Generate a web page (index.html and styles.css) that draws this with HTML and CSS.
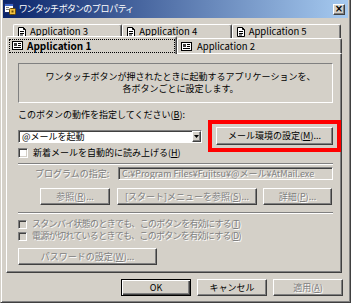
FILE: index.html
```html
<!DOCTYPE html>
<html>
<head>
  <meta charset="utf-8">
  <title>ワンタッチボタンのプロパティ</title>
  <link rel="stylesheet" href="styles.css">
</head>
<body>
  <div class="window">
    <div class="titlebar">
      <svg class="app-icon" width="12" height="12" viewBox="0 0 12 12">
        <rect x="0.5" y="0.5" width="9" height="9" fill="#ffffff" stroke="#1c2c6c"/>
        <rect x="1" y="1" width="8" height="2" fill="#3a64c8"/>
        <rect x="2" y="4" width="3" height="1" fill="#808080"/>
        <rect x="2" y="6" width="3" height="1" fill="#808080"/>
        <rect x="5.5" y="5.5" width="6" height="6" rx="1" fill="#f0c040" stroke="#6a4a00"/>
        <rect x="7.5" y="7.5" width="2" height="2" fill="#6a4a00"/>
      </svg>
      <span class="title">ワンタッチボタンのプロパティ</span>
      <span class="close">×</span>
    </div>

    <div class="tabs">
      <div class="tab-row back">
        <div class="tab">
          <svg class="doc-icon" width="8" height="10" viewBox="0 0 8 10">
            <path d="M0.5 0.5 H5.5 L7.5 2.5 V9.5 H0.5 Z" fill="#ffffff" stroke="#000000"/>
            <path d="M5.5 0.5 V2.5 H7.5" fill="none" stroke="#000000"/>
            <path d="M2 4.5 H6 M2 6.5 H6 M2 8 H5" stroke="#000000"/>
          </svg>
          <span>Application 3</span>
        </div>
        <div class="tab">
          <svg class="doc-icon" width="8" height="10" viewBox="0 0 8 10">
            <path d="M0.5 0.5 H5.5 L7.5 2.5 V9.5 H0.5 Z" fill="#ffffff" stroke="#000000"/>
            <path d="M5.5 0.5 V2.5 H7.5" fill="none" stroke="#000000"/>
            <path d="M2 4.5 H6 M2 6.5 H6 M2 8 H5" stroke="#000000"/>
          </svg>
          <span>Application 4</span>
        </div>
        <div class="tab">
          <svg class="doc-icon" width="8" height="10" viewBox="0 0 8 10">
            <path d="M0.5 0.5 H5.5 L7.5 2.5 V9.5 H0.5 Z" fill="#ffffff" stroke="#000000"/>
            <path d="M5.5 0.5 V2.5 H7.5" fill="none" stroke="#000000"/>
            <path d="M2 4.5 H6 M2 6.5 H6 M2 8 H5" stroke="#000000"/>
          </svg>
          <span>Application 5</span>
        </div>
      </div>
      <div class="tab-row front">
        <div class="tab selected">
          <span class="focus">
            <svg class="card-icon" width="11" height="9" viewBox="0 0 11 9">
              <rect x="0.5" y="0.5" width="10" height="8" fill="#ffffff" stroke="#000000"/>
              <rect x="2" y="2" width="3" height="3" fill="#404040"/>
              <path d="M6 2.5 H9 M6 4.5 H9 M2 6.5 H9" stroke="#000000"/>
            </svg>
            <b>Application 1</b>
          </span>
        </div>
        <div class="tab">
          <svg class="card-icon" width="11" height="9" viewBox="0 0 11 9">
            <rect x="0.5" y="0.5" width="10" height="8" fill="#ffffff" stroke="#000000"/>
            <rect x="2" y="2" width="3" height="3" fill="#404040"/>
            <path d="M6 2.5 H9 M6 4.5 H9 M2 6.5 H9" stroke="#000000"/>
          </svg>
          <span>Application 2</span>
        </div>
      </div>
    </div>

    <div class="panel">
      <div class="info">
        ワンタッチボタンが押されたときに起動するアプリケーションを、<br>
        各ボタンごとに設定します。
      </div>

      <div class="label">このボタンの動作を指定してください(<u>B</u>):</div>

      <div class="row action-row">
        <div class="combo">
          <span class="combo-text">@メールを起動</span>
          <span class="combo-btn">
            <svg width="5" height="3" viewBox="0 0 5 3"><path d="M0 0 H5 L2.5 3 Z" fill="#000000"/></svg>
          </span>
        </div>
        <div class="highlight">
          <div class="btn mail-btn">メール環境の設定(<u>M</u>)...</div>
        </div>
      </div>

      <div class="check">
        <span class="box"></span>
        <span>新着メールを自動的に読み上げる(<u>H</u>)</span>
      </div>

      <div class="sep"></div>

      <div class="row program-row">
        <span class="prog-label disabled">プログラムの指定:</span>
        <div class="field disabled">C:¥Program Files¥Fujitsu¥@メール¥AtMail.exe</div>
      </div>

      <div class="row btn-row">
        <div class="btn disabled browse-btn">参照(<u>R</u>)...</div>
        <div class="btn disabled start-btn">[スタート]メニューを参照(<u>S</u>)...</div>
        <div class="btn disabled detail-btn">詳細(<u>P</u>)...</div>
      </div>

      <div class="sep sep-lower"></div>

      <div class="check off first-off">
        <span class="box"></span>
        <span class="disabled narrow">スタンバイ状態のときでも、このボタンを有効にする(<u>T</u>)</span>
      </div>
      <div class="check off">
        <span class="box"></span>
        <span class="disabled narrow">電源が切れているときでも、このボタンを有効にする(<u>D</u>)</span>
      </div>

      <div class="btn disabled pw-btn">パスワードの設定(<u>W</u>)...</div>
    </div>

    <div class="actions">
      <div class="btn default">OK</div>
      <div class="btn">キャンセル</div>
      <div class="btn disabled">適用(<u>A</u>)</div>
    </div>
  </div>
</body>
</html>
```

FILE: styles.css
```css
body {
  margin: 0;
  font-family: "Noto Sans CJK JP", sans-serif;
  font-size: 9px;
  line-height: 12px;
  color: #000000;
  background-color: #d4d0c8;
}

u {
  text-decoration: underline;
  text-underline-offset: 1px;
}

.window {
  box-sizing: border-box;
  width: 351px;
  height: 303px;
  padding: 0 2px 2px 2px;
  background-color: #d4d0c8;
  border: 1px solid;
  border-top: none;
  border-color: #d4d0c8 #404040 #404040 #d4d0c8;
  box-shadow: inset 1px 0 #ffffff, inset -1px -1px #808080;
}

/* title bar */
.titlebar {
  display: flex;
  align-items: center;
  height: 18px;
  padding: 0 3px 0 1px;
  background: linear-gradient(to right, #0a246a, #a6caf0);
}

.app-icon {
  margin-right: 3px;
}

.title {
  color: #ffffff;
  font-size: 9px;
  font-feature-settings: "palt" 1;
  letter-spacing: 0.1px;
}

.close {
  box-sizing: border-box;
  margin-left: auto;
  width: 12px;
  height: 11px;
  display: flex;
  align-items: center;
  justify-content: center;
  font-family: "DejaVu Sans", sans-serif;
  font-size: 10px;
  font-weight: bold;
  line-height: 1;
  background-color: #d4d0c8;
  border: 1px solid;
  border-color: #ffffff #404040 #404040 #ffffff;
  box-shadow: inset -1px -1px #808080;
}

/* tabs */
.tabs {
  margin-top: 6px;
  position: relative;
  z-index: 1;
}

.tab-row {
  display: flex;
}

.tab-row.back {
  margin: 0 7px 0 10px;
  height: 14px;
}

.tab-row.front {
  margin: 0 6px 0 5px;
  height: 15px;
}

.tab {
  flex: 1;
  box-sizing: border-box;
  display: flex;
  align-items: center;
  gap: 4px;
  padding-left: 4px;
  font-size: 9.5px;
  line-height: 11px;
  background-color: #d4d0c8;
  border-top: 1px solid #ffffff;
  border-left: 1px solid #ffffff;
  border-right: 1px solid #404040;
  border-radius: 2px 2px 0 0;
  box-shadow: inset -1px 0 #808080;
}

.front .tab + .tab {
  padding-left: 3px;
  gap: 5px;
}

.tab.selected {
  margin: -2px 0 -1px -2px;
  padding: 0 2px 0 3px;
  height: 18px;
  flex: 0 0 171px;
}

.focus {
  flex: 1;
  display: flex;
  align-items: center;
  gap: 4px;
  height: 12px;
  padding-left: 2px;
  outline: 1px dotted #000000;
  outline-offset: 0;
}

.focus b {
  font-size: 10px;
}

/* panel */
.panel {
  box-sizing: border-box;
  height: 220px;
  margin: 0 6px 0 3px;
  padding: 9px 8px 6px 11px;
  border-top: 1px solid #ffffff;
  border-left: 1px solid #ffffff;
  border-right: 1px solid #404040;
  border-bottom: 1px solid #404040;
  box-shadow: inset -1px -1px #808080;
}

.info {
  box-sizing: border-box;
  height: 40px;
  display: flex;
  flex-direction: column;
  justify-content: center;
  padding-left: 10px;
  text-align: center;
  line-height: 12px;
  border: 1px solid;
  border-color: #808080 #ffffff #ffffff #808080;
}

.label {
  margin-top: 6px;
  height: 12px;
}

.row {
  display: flex;
  align-items: center;
}

.action-row {
  margin-top: 6px;
  height: 18px;
  justify-content: space-between;
}

.combo {
  box-sizing: border-box;
  width: 184px;
  height: 13px;
  display: flex;
  background-color: #ffffff;
  border: 1px solid;
  border-color: #808080 #ffffff #ffffff #808080;
  box-shadow: inset 1px 1px #404040;
}

.combo-text {
  flex: 1;
  padding-left: 3px;
  line-height: 11px;
}

.combo-btn {
  box-sizing: border-box;
  width: 9px;
  display: flex;
  align-items: center;
  justify-content: center;
  background-color: #d4d0c8;
  border: 1px solid;
  border-color: #ffffff #404040 #404040 #ffffff;
  box-shadow: inset -1px -1px #808080;
}

/* red annotation frame drawn over the dialog */
.highlight {
  position: relative;
}

.highlight::after {
  content: "";
  position: absolute;
  left: -8px;
  top: -7px;
  right: -8px;
  bottom: -7px;
  border: 4px solid #ff0000;
}

.btn {
  box-sizing: border-box;
  height: 17px;
  display: flex;
  align-items: center;
  justify-content: center;
  white-space: nowrap;
  background-color: #d4d0c8;
  border: 1px solid;
  border-color: #ffffff #404040 #404040 #ffffff;
  box-shadow: inset -1px -1px #808080;
}

.mail-btn {
  width: 117px;
  height: 18px;
}

.check {
  margin-top: 2px;
  height: 12px;
  display: flex;
  align-items: center;
  gap: 5px;
}

.box {
  box-sizing: border-box;
  width: 10px;
  height: 10px;
  background-color: #ffffff;
  border: 1px solid;
  border-color: #808080 #ffffff #ffffff #808080;
  box-shadow: inset 1px 1px #404040, inset -1px -1px #d4d0c8;
}

.check.off {
  margin-top: 0;
}

.check.first-off {
  margin-top: 4px;
}

.check.off .box {
  width: 9px;
  height: 9px;
  background-color: #d4d0c8;
}

.narrow {
  letter-spacing: -0.7px;
}

.sep {
  margin-top: 4px;
  height: 0;
  border-top: 1px solid #808080;
  border-bottom: 1px solid #ffffff;
}

.sep-lower {
  margin-top: 7px;
}

.disabled {
  color: #808080;
  text-shadow: 1px 1px 0 #ffffff;
}

.program-row {
  margin-top: 2px;
  height: 13px;
}

.prog-label {
  margin-left: 17px;
}

.field {
  box-sizing: border-box;
  margin-left: auto;
  width: 215px;
  height: 13px;
  padding-left: 3px;
  line-height: 11px;
  white-space: nowrap;
  overflow: hidden;
  border: 1px solid;
  border-color: #808080 #ffffff #ffffff #808080;
  box-shadow: inset 1px 1px #404040;
}

.btn-row {
  margin-top: 8px;
  height: 17px;
}

.browse-btn {
  width: 70px;
  margin-left: 22px;
}

.start-btn {
  width: 140px;
  margin-left: 7px;
}

.detail-btn {
  width: 69px;
  margin-left: 6px;
}

.pw-btn {
  width: 139px;
  margin-top: 6px;
}

/* bottom buttons */
.actions {
  display: flex;
  justify-content: flex-end;
  gap: 6px;
  margin-top: 6px;
  padding-right: 5px;
}

.actions .btn {
  width: 70px;
  height: 17px;
}

.actions .btn.default {
  border: 1px solid #000000;
  box-shadow: inset 1px 1px #ffffff, inset -1px -1px #404040, inset -2px -2px #808080;
}
```
